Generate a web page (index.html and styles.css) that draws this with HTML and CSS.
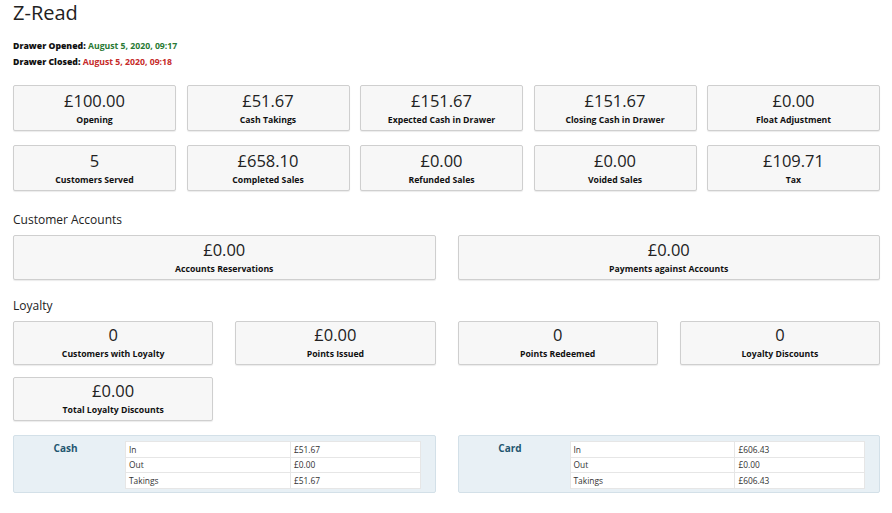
FILE: index.html
```html
<!DOCTYPE html>
<html>
<head>
<meta charset="utf-8">
<link rel="stylesheet" href="styles.css">
</head>
<body>
<div class="page">
  <h1 class="title">Z-Read</h1>
  <div class="drawer">
    <div class="drawer-line"><b>Drawer Opened:</b> <span class="opened">August 5, 2020, 09:17</span></div>
    <div class="drawer-line"><b>Drawer Closed:</b> <span class="closed">August 5, 2020, 09:18</span></div>
  </div>

  <div class="grid5">
    <div class="card"><div class="val">£100.00</div><div class="lbl">Opening</div></div>
    <div class="card"><div class="val">£51.67</div><div class="lbl">Cash Takings</div></div>
    <div class="card"><div class="val">£151.67</div><div class="lbl">Expected Cash in Drawer</div></div>
    <div class="card"><div class="val">£151.67</div><div class="lbl">Closing Cash in Drawer</div></div>
    <div class="card"><div class="val">£0.00</div><div class="lbl">Float Adjustment</div></div>
    <div class="card"><div class="val">5</div><div class="lbl">Customers Served</div></div>
    <div class="card"><div class="val">£658.10</div><div class="lbl">Completed Sales</div></div>
    <div class="card"><div class="val">£0.00</div><div class="lbl">Refunded Sales</div></div>
    <div class="card"><div class="val">£0.00</div><div class="lbl">Voided Sales</div></div>
    <div class="card"><div class="val">£109.71</div><div class="lbl">Tax</div></div>
  </div>

  <h2 class="section">Customer Accounts</h2>
  <div class="grid2">
    <div class="card card-acc"><div class="val">£0.00</div><div class="lbl">Accounts Reservations</div></div>
    <div class="card card-acc"><div class="val">£0.00</div><div class="lbl">Payments against Accounts</div></div>
  </div>

  <h2 class="section section-loyalty">Loyalty</h2>
  <div class="grid4">
    <div class="card card-loy"><div class="val">0</div><div class="lbl">Customers with Loyalty</div></div>
    <div class="card card-loy"><div class="val">£0.00</div><div class="lbl">Points Issued</div></div>
    <div class="card card-loy"><div class="val">0</div><div class="lbl">Points Redeemed</div></div>
    <div class="card card-loy"><div class="val">0</div><div class="lbl">Loyalty Discounts</div></div>
    <div class="card card-loy"><div class="val">£0.00</div><div class="lbl">Total Loyalty Discounts</div></div>
  </div>

  <div class="grid2 panels">
    <div class="panel">
      <div class="panel-label">Cash</div>
      <table class="ptable">
        <tr><td>In</td><td>£51.67</td></tr>
        <tr><td>Out</td><td>£0.00</td></tr>
        <tr><td>Takings</td><td>£51.67</td></tr>
      </table>
    </div>
    <div class="panel">
      <div class="panel-label">Card</div>
      <table class="ptable">
        <tr><td>In</td><td>£606.43</td></tr>
        <tr><td>Out</td><td>£0.00</td></tr>
        <tr><td>Takings</td><td>£606.43</td></tr>
      </table>
    </div>
  </div>
</div>
</body>
</html>
```

FILE: styles.css
```css
html, body {
  margin: 0;
  padding: 0;
  background: #ffffff;
}
body {
  font-family: "Open Sans", "Liberation Sans", sans-serif;
  color: #222;
}
.page {
  width: 867px;
  padding: 0 12px 0 13px;
}
.title {
  margin: 0;
  font-size: 20px;
  font-weight: 400;
  line-height: 26px;
  color: #222;
}
.drawer {
  margin-top: 12px;
}
.drawer-line {
  font-size: 8.7px;
  line-height: 16px;
  font-weight: 700;
  color: #111;
}
.opened { color: #2a7a35; }
.closed { color: #c62a2a; }

.grid5 {
  margin-top: 15px;
  display: grid;
  grid-template-columns: repeat(4, 163px) 1fr;
  column-gap: 10.5px;
  row-gap: 14px;
}
.grid2 {
  display: grid;
  grid-template-columns: 1fr 1fr;
  column-gap: 22px;
}
.grid4 {
  display: grid;
  grid-template-columns: repeat(4, 1fr);
  column-gap: 22px;
  row-gap: 12px;
}
.card {
  box-sizing: border-box;
  height: 46px;
  padding-top: 5px;
  background: #f7f7f7;
  border: 1px solid #cfcfcf;
  border-radius: 2px;
  box-shadow: 0 1px 1px rgba(0,0,0,0.08);
  text-align: center;
}
.val {
  font-size: 16.5px;
  line-height: 20px;
  color: #222;
}
.lbl {
  margin-top: 3px;
  font-size: 8.7px;
  line-height: 12px;
  font-weight: 700;
  color: #111;
}
.card-acc {
  height: 45px;
  padding-top: 4px;
}
.card-loy {
  height: 44px;
  padding-top: 3px;
}
.section {
  margin: 21px 0 7px;
  font-size: 12px;
  line-height: 16px;
  font-weight: 400;
  color: #222;
}
.section-loyalty {
  margin-top: 18px;
}
.panels {
  margin-top: 14px;
}
.panel {
  box-sizing: border-box;
  height: 58px;
  display: flex;
  padding: 5px 14px 5px 0;
  background: #e8f0f5;
  border: 1px solid #d3e0e8;
  border-radius: 2px;
}
.panel-label {
  width: 111px;
  flex: none;
  text-align: center;
  padding-right: 8px;
  box-sizing: border-box;
  font-size: 10px;
  line-height: 14px;
  font-weight: 700;
  color: #1f5670;
}
.ptable {
  flex: 1;
  border-collapse: collapse;
  background: #fff;
  font-size: 8.4px;
  color: #333;
  align-self: flex-start;
}
.ptable td {
  height: 15.5px;
  padding: 0 0 0 3px;
  border: 1px solid #e6e6e6;
  box-sizing: border-box;
  vertical-align: middle;
}
.ptable td:first-child {
  width: 56%;
}
```
